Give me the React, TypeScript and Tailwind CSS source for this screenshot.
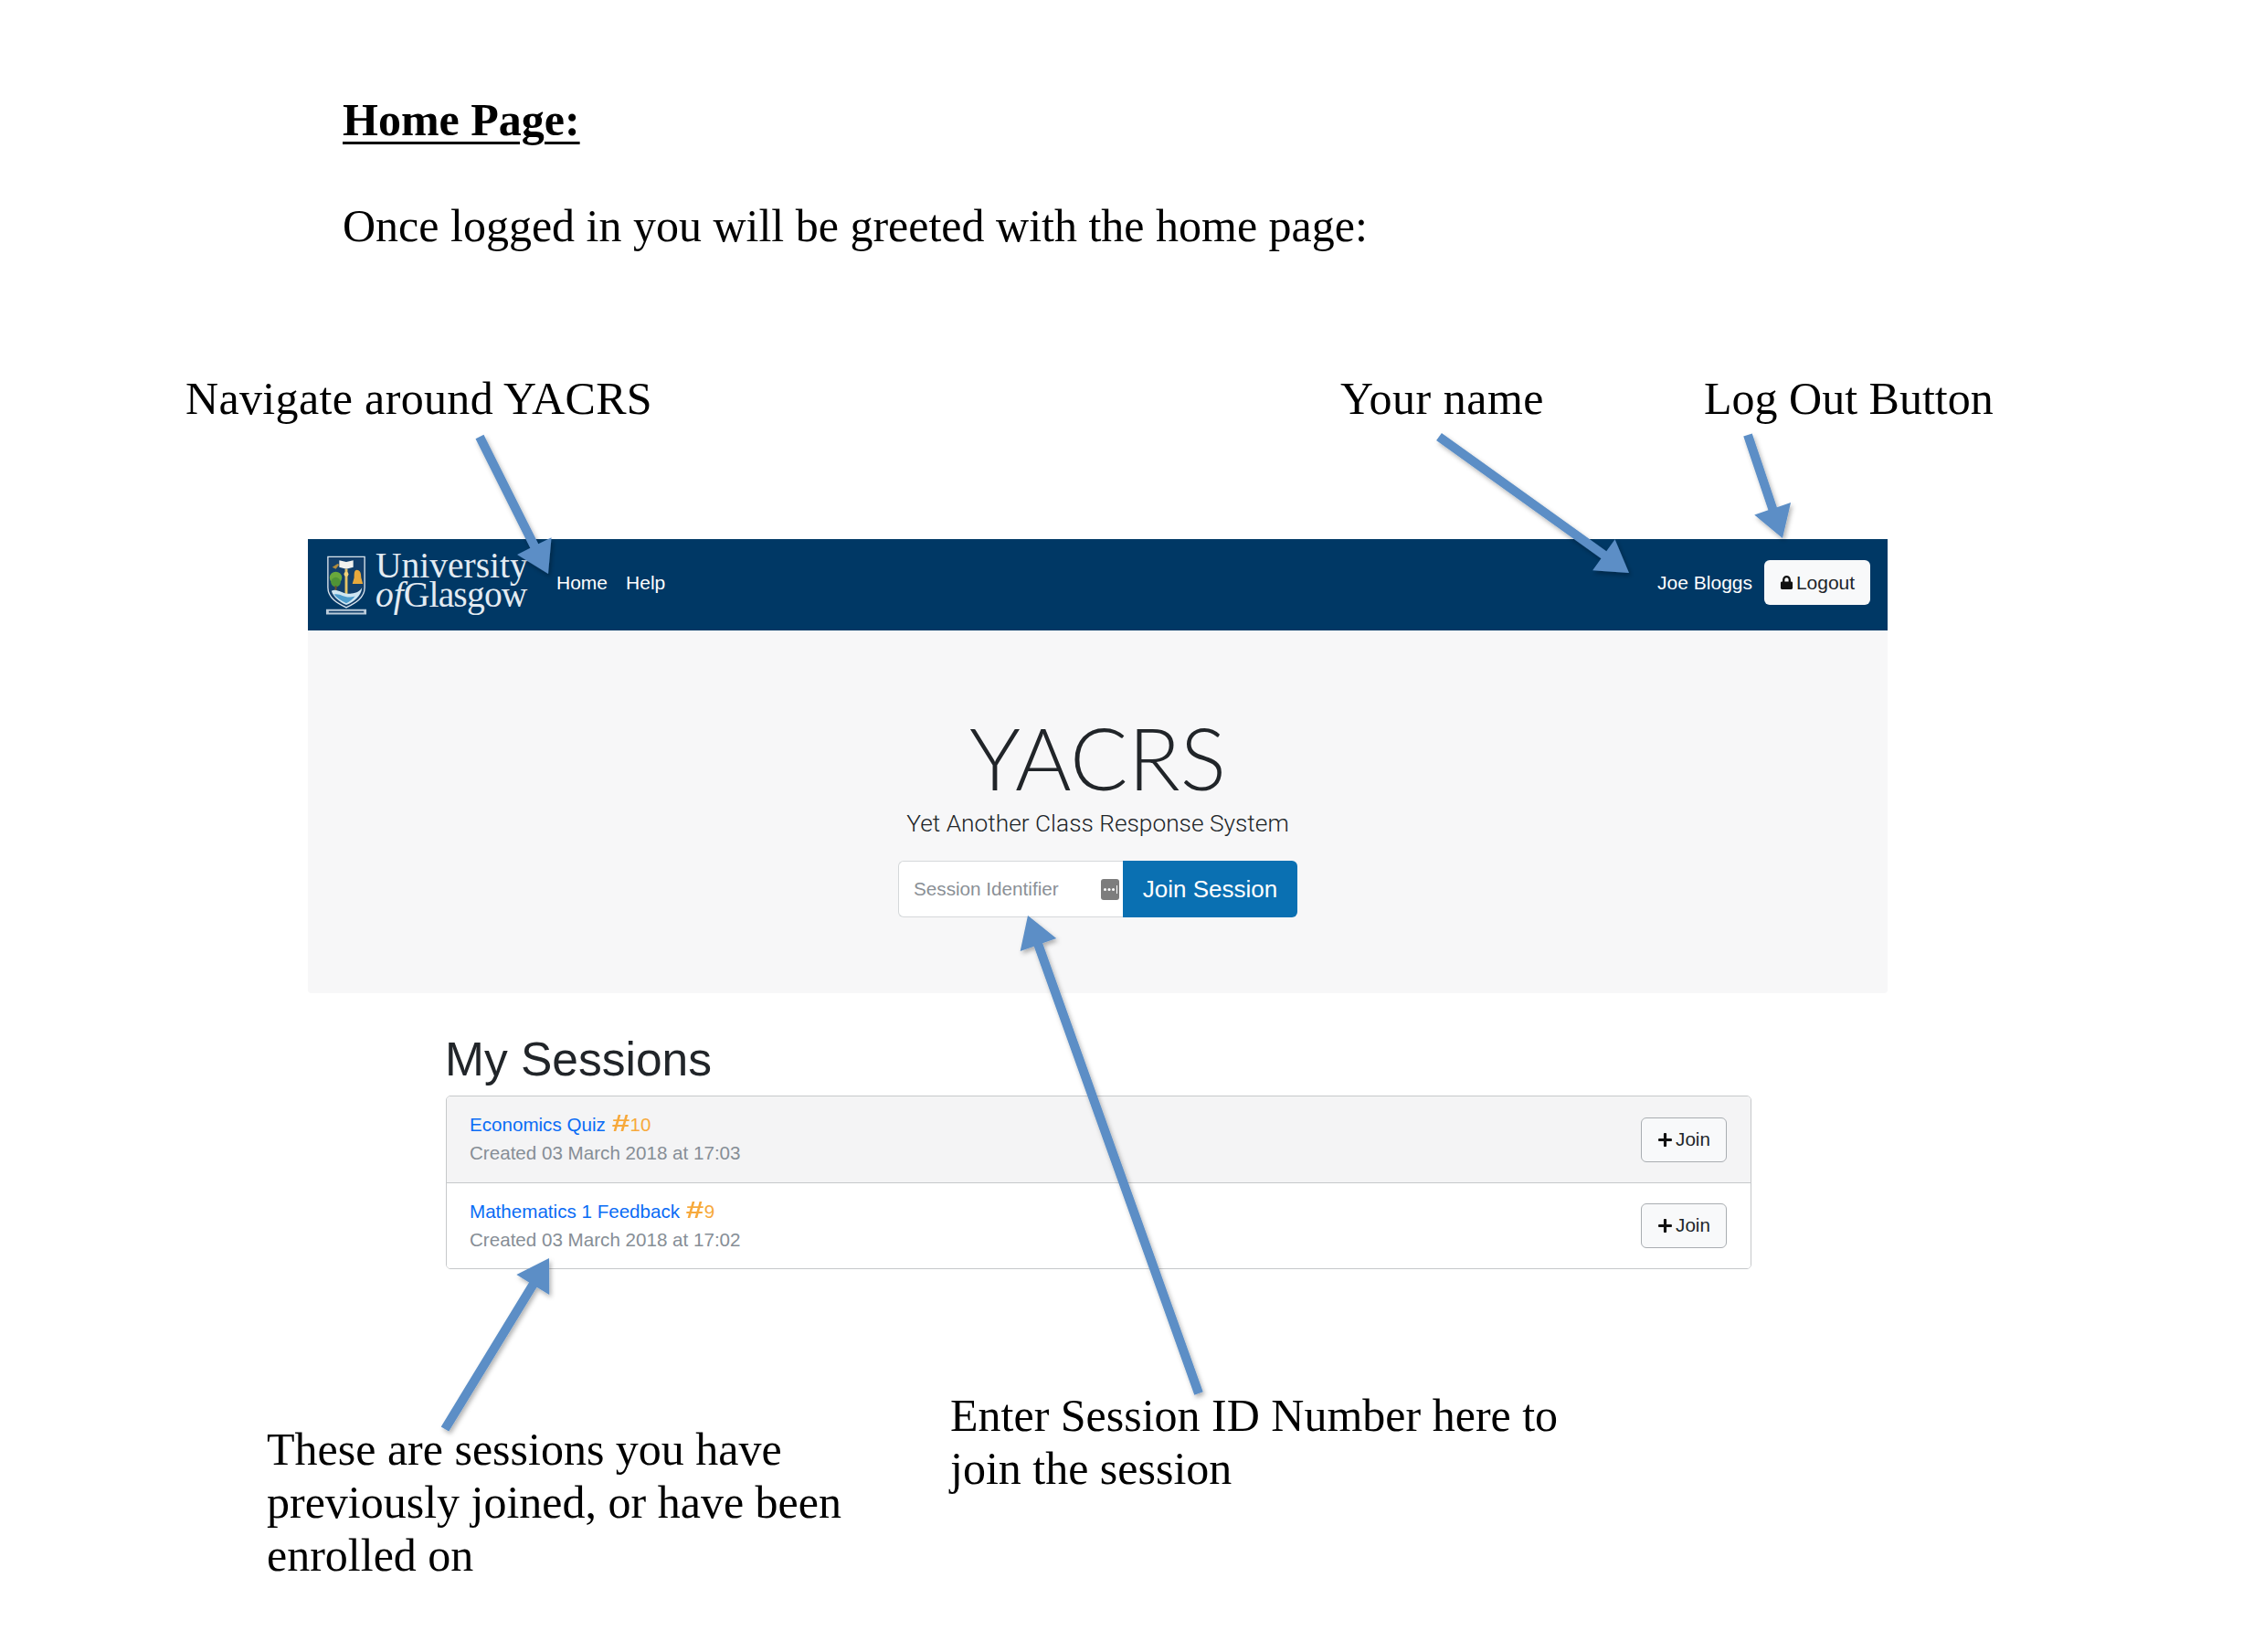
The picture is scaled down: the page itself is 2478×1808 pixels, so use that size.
import { FaLock, FaPlus } from "react-icons/fa";

type Point = [number, number];

const serif = "font-['Liberation_Serif',serif]";
const sans = "font-['Liberation_Sans',sans-serif]";

const sessions = [
  { name: "Economics Quiz", id: "10", created: "Created 03 March 2018 at 17:03", shaded: true },
  { name: "Mathematics 1 Feedback", id: "9", created: "Created 03 March 2018 at 17:02", shaded: false },
];

function arrowPoints(from: Point, tip: Point, headLength: number, headWidth: number, shaftWidth: number) {
  const dx = tip[0] - from[0];
  const dy = tip[1] - from[1];
  const len = Math.hypot(dx, dy);
  const ux = dx / len;
  const uy = dy / len;
  const bx = tip[0] - ux * headLength;
  const by = tip[1] - uy * headLength;
  const side = (x: number, y: number, w: number) => `${x - uy * w},${y + ux * w}`;
  return [
    side(from[0], from[1], shaftWidth / 2),
    side(bx, by, shaftWidth / 2),
    side(bx, by, headWidth / 2),
    `${tip[0]},${tip[1]}`,
    side(bx, by, -headWidth / 2),
    side(bx, by, -shaftWidth / 2),
    side(from[0], from[1], -shaftWidth / 2),
  ].join(" ");
}

const arrows: { from: Point; tip: Point }[] = [
  { from: [525, 478], tip: [600, 628] },
  { from: [1575, 478], tip: [1783, 627] },
  { from: [1913, 476], tip: [1951, 589] },
  { from: [1312, 1525], tip: [1125, 1002] },
  { from: [487, 1564], tip: [601, 1377] },
];

function Crest() {
  return (
    <svg width="46" height="68" viewBox="0 0 48 70" className="shrink-0 mt-[5px]">
      <path d="M3 3 H45 V38 C45 50 34 56 24 61 C14 56 3 50 3 38 Z" fill="#123f6b" stroke="#dbe5ee" strokeWidth="1.4" />
      <path d="M16 7 L24 9 L32 7 V15 L24 17 L16 15 Z" fill="#f2f2ee" />
      <path d="M8 15 l6 -4 l2 1 l-4 5 z" fill="#b08a3c" />
      <rect x="22.5" y="17" width="3" height="31" fill="#e6c466" />
      <circle cx="24" cy="23" r="2.6" fill="#f0d27a" />
      <circle cx="12" cy="27" r="7" fill="#69a83c" />
      <circle cx="12" cy="32" r="5.5" fill="#4f9436" />
      <rect x="11" y="36" width="2" height="8" fill="#6d5228" />
      <path d="M36 18 C40 18 41 22 41 27 L43 34 H31 L33 27 C33 22 33 18 36 18 Z" fill="#e9a93c" />
      <path d="M7 42 C14 38 20 47 30 45 C36 44 40 42 42 38 C41 48 33 54 24 58 C16 54 10 50 7 42 Z" fill="#cfe6f2" />
      <path d="M10 46 C18 44 22 52 34 48 C31 52 28 54 24 56 C18 53 13 50 10 46 Z" fill="#4d9ccc" />
      <path d="M1 63 H47 V69 H1 Z" fill="#dbe5ee" opacity="0.85" />
      <rect x="4" y="65" width="40" height="1.8" fill="#123f6b" />
    </svg>
  );
}

function KeyIcon() {
  return (
    <svg width="20" height="23" viewBox="0 0 20 23" className="shrink-0">
      <rect width="20" height="23" rx="3" fill="#7d7d7d" />
      <circle cx="4.5" cy="11.5" r="1.5" fill="#fff" />
      <circle cx="9" cy="11.5" r="1.5" fill="#fff" />
      <circle cx="13.5" cy="11.5" r="1.5" fill="#fff" />
      <rect x="17" y="7" width="1" height="9" fill="#fff" />
    </svg>
  );
}

function Navbar() {
  return (
    <nav className={`h-[100px] bg-[#003865] flex items-center pl-[19px] pr-[19px] pb-[5px] text-white ${sans}`}>
      <Crest />
      <div className={`ml-[9px] mb-[5px] w-[178px] text-[39.5px] leading-[32px] text-[#e3ebf2] ${serif}`}>
        <div>University</div>
        <div className="whitespace-nowrap">
          <span className="italic">of</span>
          <span className="tracking-[-0.8px]">Glasgow</span>
        </div>
      </div>
      <a className="ml-[20px] text-[21px]">Home</a>
      <a className="ml-[20px] text-[21px]">Help</a>
      <span className="ml-auto text-[21px]">Joe Bloggs</span>
      <button className="ml-[13px] w-[116px] h-[49px] rounded-[6px] bg-[#f8f9fa] text-[#212529] text-[21px] flex items-center justify-center gap-[3px]">
        <FaLock size={15} className="text-[#111]" />
        Logout
      </button>
    </nav>
  );
}

function Hero() {
  return (
    <section className="h-[397px] bg-[#f7f7f8] flex flex-col items-center pt-[95px] rounded-b-[4px]">
      <h1 className="font-['Lato',sans-serif] font-light text-[94px] leading-[88px] text-[#212529]">YACRS</h1>
      <p className="mt-[10px] font-['Roboto',sans-serif] font-light text-[26.3px] leading-[36px] text-[#212529]">
        Yet Another Class Response System
      </p>
      <div className={`mt-[23px] flex h-[62px] w-[437px] ${sans}`}>
        <div className="w-[246px] bg-white border border-[#d5d8da] border-r-0 rounded-l-[6px] flex items-center pl-[16px] pr-[4px] justify-between text-[20.7px] text-[#8a9096]">
          <span>Session Identifier</span>
          <KeyIcon />
        </div>
        <button className="flex-1 bg-[#0a70b2] text-white text-[26px] rounded-r-[6px]">Join Session</button>
      </div>
    </section>
  );
}

function SessionList() {
  return (
    <section className={`ml-[150px] mr-[149px] mt-[42px] ${sans}`}>
      <h2 className="text-[51.5px] leading-[60px] text-[#212529]">My Sessions</h2>
      <ul className="ml-[1px] mt-[10px] border border-[#c6c8ca] rounded-[5px] overflow-hidden">
        {sessions.map((s, i) => (
          <li
            key={s.id}
            className={`h-[94px] flex items-center justify-between pl-[25px] pr-[26px] ${s.shaded ? "bg-[#f4f4f5]" : "bg-white"} ${i > 0 ? "border-t border-[#c6c8ca]" : ""}`}
          >
            <div className="text-[20.6px] leading-[31px] pb-[2px]">
              <div className="h-[31px]">
                <a className="text-[#0a6cf5]">{s.name}</a>{" "}
                <span className="text-[#f7a93b]">
                  <b className="inline-block w-[21px] text-center scale-x-[1.4] text-[25px] leading-[20px]">#</b>
                  {s.id}
                </span>
              </div>
              <div className="text-[#868e96]">{s.created}</div>
            </div>
            <button className="w-[94px] h-[49px] rounded-[6px] border border-[#a9adb1] bg-[#f8f9fa] text-[#212529] text-[20.6px] flex items-center justify-center gap-[3px]">
              <FaPlus size={17} className="text-[#111]" />
              Join
            </button>
          </li>
        ))}
      </ul>
    </section>
  );
}

export default function App() {
  return (
    <div className={`relative w-[2478px] h-[1808px] bg-white overflow-hidden text-black ${serif}`}>
      <div className="pl-[375px] pt-[102px]">
        <h1 className="text-[50px] leading-[58px] font-bold underline underline-offset-[7px] decoration-[3px]">Home Page:</h1>
        <p className="mt-[58px] text-[50px] leading-[58px]">Once logged in you will be greeted with the home page:</p>
      </div>

      <div className="mt-[131px] pl-[203px] flex text-[50px] leading-[58px] whitespace-nowrap">
        <span className="w-[1264px] tracking-[0.35px]">Navigate around YACRS</span>
        <span className="w-[398px] tracking-[0.5px]">Your name</span>
        <span>Log Out Button</span>
      </div>

      <div className="mt-[125px] mx-[337px] w-[1729px]">
        <Navbar />
        <Hero />
        <SessionList />
      </div>

      <div className="mt-[131px] flex text-[50px] leading-[58px]">
        <p className="ml-[292px] mt-[37px] w-[748px]">
          These are sessions you have
          <br />
          previously joined, or have been
          <br />
          enrolled on
        </p>
        <p className="">
          Enter Session ID Number here to
          <br />
          join the session
        </p>
      </div>

      <svg className="absolute inset-0 pointer-events-none" width="2478" height="1808" viewBox="0 0 2478 1808">
        <defs>
          <filter id="arrowShadow" x="-20%" y="-20%" width="140%" height="140%">
            <feDropShadow dx="2" dy="3" stdDeviation="2.5" floodColor="#000" floodOpacity="0.3" />
          </filter>
        </defs>
        {arrows.map((a, i) => (
          <polygon key={i} points={arrowPoints(a.from, a.tip, 34, 42, 10)} fill="#5b8ec6" filter="url(#arrowShadow)" />
        ))}
      </svg>
    </div>
  );
}
